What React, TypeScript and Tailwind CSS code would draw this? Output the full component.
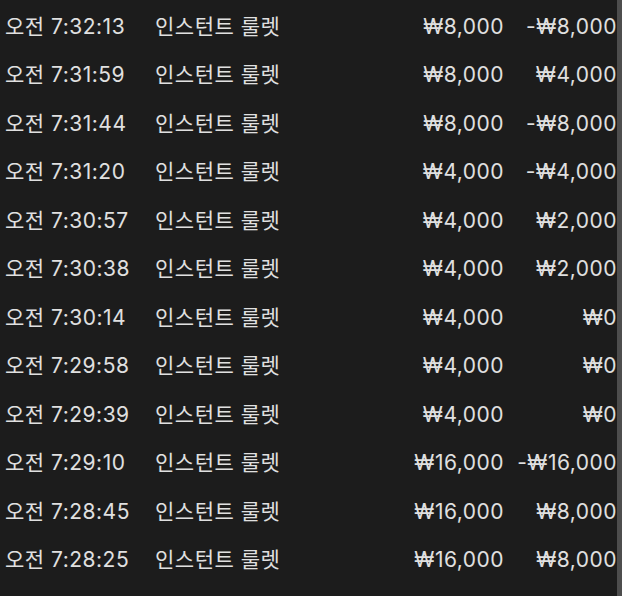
const rows = [
  { time: "오전 7:32:13", price: "₩8,000", change: "-₩8,000" },
  { time: "오전 7:31:59", price: "₩8,000", change: "₩4,000" },
  { time: "오전 7:31:44", price: "₩8,000", change: "-₩8,000" },
  { time: "오전 7:31:20", price: "₩4,000", change: "-₩4,000" },
  { time: "오전 7:30:57", price: "₩4,000", change: "₩2,000" },
  { time: "오전 7:30:38", price: "₩4,000", change: "₩2,000" },
  { time: "오전 7:30:14", price: "₩4,000", change: "₩0" },
  { time: "오전 7:29:58", price: "₩4,000", change: "₩0" },
  { time: "오전 7:29:39", price: "₩4,000", change: "₩0" },
  { time: "오전 7:29:10", price: "₩16,000", change: "-₩16,000" },
  { time: "오전 7:28:45", price: "₩16,000", change: "₩8,000" },
  { time: "오전 7:28:25", price: "₩16,000", change: "₩8,000" },
];

export default function App() {
  return (
    <div className="flex h-[596px] w-[622px] bg-[#1c1c1c] font-['Inter','Noto_Sans_CJK_KR',sans-serif] text-[21px] tracking-[0.5px] text-[#e0e0e0]">
      <div className="flex-1 pt-[2px]">
        {rows.map((r) => (
          <div key={r.time} className="flex h-[48.5px] items-center">
            <div className="w-[155px] pl-[5px]">{r.time}</div>
            <div className="flex-1">인스턴트 룰렛</div>
            <div className="w-[112px] text-right">{r.price}</div>
            <div className="w-[113px] text-right">{r.change}</div>
          </div>
        ))}
      </div>
      <div className="w-[5px] bg-[#4d4d4d]" />
    </div>
  );
}
